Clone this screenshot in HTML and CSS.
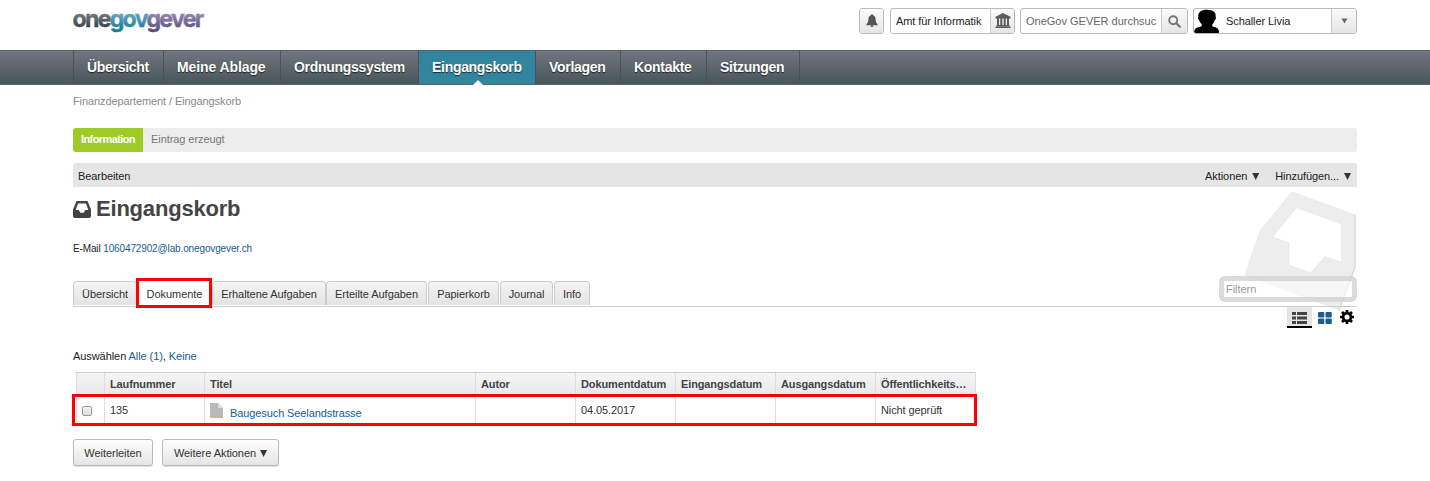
FILE: index.html
```html
<!DOCTYPE html>
<html lang="de">
<head>
<meta charset="utf-8">
<title>Eingangskorb</title>
<link rel="stylesheet" href="styles.css">
</head>
<body>
<header class="header wrap">
  <svg class="logo" width="136" height="38" viewBox="-2 -6 136 38" role="img" aria-label="onegovgever">
    <defs>
      <linearGradient id="g1" gradientUnits="userSpaceOnUse" x1="0" y1="5" x2="0" y2="20"><stop offset="0" stop-color="#777b80"/><stop offset="1" stop-color="#33434a"/></linearGradient>
      <linearGradient id="g2" gradientUnits="userSpaceOnUse" x1="0" y1="5" x2="0" y2="23"><stop offset="0" stop-color="#68a6c4"/><stop offset="1" stop-color="#19788f"/></linearGradient>
      <linearGradient id="g3" gradientUnits="userSpaceOnUse" x1="0" y1="5" x2="0" y2="23"><stop offset="0" stop-color="#948ab4"/><stop offset="1" stop-color="#574a79"/></linearGradient>
    </defs>
    <text x="-.5" y="19.300" textLength="130" lengthAdjust="spacingAndGlyphs"><tspan fill="url(#g1)" stroke="url(#g1)">one</tspan><tspan fill="url(#g2)" stroke="url(#g2)">gov</tspan><tspan fill="url(#g3)" stroke="url(#g3)">gever</tspan></text>
  </svg>
  <div class="tools">
    <div class="box bell"><span class="btn"><svg width="14" height="14" viewBox="0 0 14 14"><path d="M7 .3c.7 0 1 .4 1 1 1.900.5 2.500 2 2.600 3.900.1 2.400.6 3.400 2 5.200v.8H1.400v-.8c1.400-1.800 1.900-2.800 2-5.200.1-1.900.7-3.400 2.600-3.900 0-.6.3-1 1-1zM5.600 11.400h2.800c0 1-.6 1.500-1.400 1.500s-1.400-.5-1.400-1.500z" fill="#555"/></svg></span></div>
    <div class="box unit"><span class="grow">Amt für Informatik</span><span class="btn"><svg width="16" height="16" viewBox="0 0 16 16"><path d="M8 0l7.500 3.700V5.500H.5V3.700zM2 5.500h2v6.500H2zM5.300 5.500h2v6.500h-2zM8.700 5.500h2v6.500h-2zM12 5.500h2v6.500h-2zM1.500 12h13v1.200h-13zM.5 13.600h15V15H.5z" fill="#5c5c5c"/></svg></span></div>
    <div class="box search"><span class="grow">OneGov GEVER durchsuc</span><span class="btn"><svg width="13" height="13" viewBox="0 0 13 13"><circle cx="5.200" cy="5.200" r="4" fill="none" stroke="#777" stroke-width="1.900"/><path d="M8.300 8.300l3.500 3.500" stroke="#777" stroke-width="2.200" stroke-linecap="round"/></svg></span></div>
    <div class="box user"><svg class="avatar" width="25" height="24" viewBox="0 0 25 24"><path d="M0 24c0-3 1-4.500 3.500-5.500L7 17.500c1-.3 1-1.500.5-2.500-1.500-1.300-2-2.500-2.300-4C3.500 9.500 3.800 8.500 4.300 8 3.600 3.300 6.800.7 13 .7c6.600 0 9.300 3 8.700 7.300.5 1 .2 2.400-.9 3-.3 1.700-1 3-2.300 4-.5 1-.3 2 .3 2.500l3.200 1c2.200.7 3 2.500 3 5.500z" fill="#000"/></svg><span class="grow">Schaller Livia</span><span class="btn"><svg width="7" height="6" viewBox="0 0 7 6"><path d="M.5.5h6l-3 5z" fill="#666"/></svg></span></div>
  </div>
</header>
<nav class="nav"><div class="wrap navrow">
  <a class="n1">Übersicht</a><a class="n2">Meine Ablage</a><a class="n3">Ordnungssystem</a><a class="n4 active">Eingangskorb</a><a class="n5">Vorlagen</a><a class="n6">Kontakte</a><a class="n7">Sitzungen</a>
</div></nav>
<main class="wrap main">
  <div class="crumbs">Finanzdepartement / Eingangskorb</div>
  <div class="message"><strong>Information</strong><span>Eintrag erzeugt</span></div>
  <div class="actions"><span>Bearbeiten</span><span class="right">Aktionen <i class="tri"></i></span><span class="add">Hinzufügen... <i class="tri"></i></span></div>
  <svg class="mark" width="114" height="122" viewBox="0 0 114 122"><path fill-rule="evenodd" d="M50 0L113 23V75L97 118L3 83L18 39ZM54.500 15.500L30.500 45L47 51V73L68.500 81L83 64.500L99.500 70.500V32Z" fill="#ededed" stroke="#e2e2e2" stroke-width=".6"/><path d="M113 23v52L97 118" fill="none" stroke="#d9d9d9" stroke-width="1.300"/></svg>
  <h1><svg width="18" height="17" viewBox="0 0 18 17"><path fill-rule="evenodd" d="M3.500 0h11L18 8.500V15q0 2-2 2H2q-2 0-2-2V8.500zM5 2.500L2.700 9h3.100l1.500 2.700h3.400L12.200 9h3.100L13 2.500z" fill="#444"/></svg><span>Eingangskorb</span></h1>
  <div class="mail">E-Mail <a>1060472902@lab.onegovgever.ch</a></div>
  <div class="tabs">
    <a class="t1">Übersicht</a><a class="t2 current">Dokumente</a><a class="t3">Erhaltene Aufgaben</a><a class="t4">Erteilte Aufgaben</a><a class="t5">Papierkorb</a><a class="t6">Journal</a><a class="t7">Info</a>
    <div class="filter">Filtern</div>
  </div>
  <div class="views">
    <span class="view list"><svg width="15" height="12" viewBox="0 0 15 12"><path d="M0 0h4v3H0zM5 0h10v3H5zM0 4.500h4v3H0zM5 4.500h10v3H5zM0 9h4v3H0zM5 9h10v3H5z" fill="#444"/></svg></span>
    <svg class="tiles" width="14" height="12" viewBox="0 0 14 12"><g fill="#205c90"><rect width="6.300" height="5.400" rx="1"/><rect x="7.500" width="6.300" height="5.400" rx="1"/><rect y="6.500" width="6.300" height="5.400" rx="1"/><rect x="7.500" y="6.500" width="6.300" height="5.400" rx="1"/></g></svg>
    <svg class="gear" width="14" height="14" viewBox="0 0 14 14"><circle cx="7" cy="7" r="3.900" fill="none" stroke="#000" stroke-width="2.700"/><path d="M7 0v2.500M7 11.500V14M0 7h2.500M11.500 7H14M2 2l1.800 1.800M10.200 10.200L12 12M12 2l-1.800 1.800M3.800 10.200L2 12" stroke="#000" stroke-width="2.700"/></svg>
  </div>
  <div class="select">Auswählen <a>Alle (1)</a>, <a>Keine</a></div>
  <div class="listing">
    <div class="row head"><span></span><span>Laufnummer</span><span>Titel</span><span>Autor</span><span>Dokumentdatum</span><span>Eingangsdatum</span><span>Ausgangsdatum</span><span>Öffentlichkeits…</span></div>
    <div class="row data"><span><i class="check"></i></span><span>135</span><span class="title"><svg width="13" height="15" viewBox="0 0 13 15"><path d="M0 0h8l5 5v10H0z" fill="#b9b9b9"/><path d="M8 0v5h5z" fill="#dedede"/></svg><a>Baugesuch Seelandstrasse</a></span><span></span><span>04.05.2017</span><span></span><span></span><span>Nicht geprüft</span></div>
  </div>
  <div class="buttons"><span class="button b1">Weiterleiten</span><span class="button b2">Weitere Aktionen <i class="tri"></i></span></div>
</main>
</body>
</html>
```
FILE: styles.css
```css
* { box-sizing: border-box; }
body { margin: 0; background: #fff; color: #333; font: 11px/14px "Liberation Sans", Arial, sans-serif; height: 481px; overflow: hidden; }
a { color: #205c90; }
.wrap { width: 1284px; margin-left: 73px; position: relative; }
.header { height: 50px; display: flex; justify-content: space-between; padding-top: 8px; }
.logo { margin: -6px 0 0 -2px; overflow: visible; }
.logo text { font: 700 24px Inter, sans-serif; letter-spacing: -1.8px; stroke-width: .4px; }
.tools { display: flex; }
.box { height: 26px; display: flex; border: 1px solid #bbb; border-radius: 3px; line-height: 24px; overflow: hidden; color: #222; }
.grow { flex: 1; padding-left: 5px; white-space: nowrap; letter-spacing: -.08px; }
.btn { width: 25px; display: flex; align-items: center; justify-content: center; border-left: 1px solid #ccc; background: linear-gradient(#fafafa, #e5e5e5); }
.bell { width: 25px; margin-right: 6px; }
.bell .btn { border: 0; width: 23px; }
.unit { width: 125px; margin-right: 5px; }
.unit .btn { width: 24px; }
.search { width: 168px; margin-right: 5px; }
.search .grow { color: #666; letter-spacing: 0; }
.search .btn { width: 26px; }
.user { width: 164px; }
.user .grow { padding-left: 7px; }
.nav { height: 35px; background: linear-gradient(#70767d, #49555a); border-top: 1px solid #56616a; border-bottom: 1px solid #59656a; }
.navrow { display: flex; }
.navrow a { height: 33px; line-height: 33px; padding-left: 13px; border-left: 1px solid #495157; color: #fff; font-size: 14px; font-weight: bold; letter-spacing: -.3px; text-shadow: 0 1px 1px #222; position: relative; white-space: nowrap; }
.navrow .n2 { letter-spacing: -.1px; }
.navrow .active { background: #31859f; }
.active::after { content: ""; position: absolute; left: 54px; bottom: -1px; border: 5px solid transparent; border-top: 0; border-bottom-color: #fff; }
.n1 { width: 90px; } .n2 { width: 117px; } .n3 { width: 138px; } .n4 { width: 117px; } .n5 { width: 85px; } .n6 { width: 86px; }
.navrow .n7 { width: 94px; border-right: 1px solid #495157; }
.crumbs { height: 43px; padding-top: 9px; color: #888; letter-spacing: -.1px; }
.message { height: 24px; line-height: 23px; background: #ededed; border-radius: 3px; display: flex; color: #777; overflow: hidden; letter-spacing: -.07px; }
.message strong { width: 70px; background: #9fcb26; color: #fff; text-align: center; letter-spacing: -.6px; }
.message span { padding-left: 8px; }
.actions { margin-top: 11px; height: 24px; line-height: 26px; background: #e5e5e5; border-radius: 3px 3px 0 0; padding: 0 6px 0 5px; display: flex; color: #222; letter-spacing: -.08px; }
.right { margin-left: auto; margin-right: 16px; }
.tri { display: inline-block; width: 7px; height: 7px; background: #333; clip-path: polygon(0 0, 100% 0, 50% 100%); margin-left: 1px; }
.actions .tri { margin-left: 2px; }
.mark { position: absolute; right: 1px; top: 107px; }
h1 { margin: 0; height: 44px; display: flex; align-items: center; gap: 5px; font-size: 22px; line-height: 44px; color: #444; letter-spacing: -.2px; }
.mail { height: 50px; padding-top: 11px; font-size: 10px; color: #222; letter-spacing: -.13px; }
.tabs { height: 26px; display: flex; border-bottom: 1px solid #ccc; position: relative; letter-spacing: -.05px; }
.tabs a { height: 24px; line-height: 25px; margin-right: 1px; text-align: center; color: #333; border: 1px solid #ccc; border-bottom: 0; border-radius: 4px 4px 0 0; background: linear-gradient(#f4f4f4, #e3e3e3); white-space: nowrap; }
.tabs .current { height: 30px; margin: -3px 0 0 -2px; padding-left: 1px; line-height: 26px; border: 3px solid #f00; border-radius: 0; background: #fff; z-index: 1; }
.t1 { width: 64px; } .t2 { width: 76px; } .tabs .t3 { width: 114px; margin-right: 0; } .t4 { width: 101px; } .t5 { width: 71px; } .t6 { width: 53px; } .t7 { width: 36px; }
.filter { position: absolute; right: 0; top: -5px; width: 138px; height: 26px; border: 5px solid rgba(210,210,210,.8); border-radius: 6px; background: rgba(255,255,255,.5); background-clip: padding-box; color: #999; line-height: 16px; padding-left: 2px; }
.views { height: 42px; display: flex; justify-content: flex-end; position: relative; }
.list { width: 25px; height: 21px; background: #e5e5e5; border-bottom: 2px solid #000; display: flex; justify-content: center; padding-top: 5px; }
.tiles { margin: 5px 8px 0 6px; }
.gear { margin: 3px 3px 0 0; }
.select { height: 23px; color: #222; letter-spacing: -.07px; }
.listing { width: 905px; height: 54px; margin-left: -1px; }
.row { display: grid; grid-template-columns: 28px 100px 271px 100px 100px 100px 100px 100px; margin-left: 4px; width: 900px; }
.row > span { border-left: 1px solid #ddd; padding-left: 5px; overflow: hidden; white-space: nowrap; }
.head { height: 22px; border-top: 1px solid #ccc; background: linear-gradient(#f5f5f5, #e9e9e9); border-right: 1px solid #ddd; font-weight: bold; line-height: 22px; color: #444; letter-spacing: -.12px; }
.data { width: 905px; height: 32px; margin-left: 0; padding-left: 1px; border: 3px solid #f00; line-height: 26px; color: #333; background: #fff; letter-spacing: -.1px; }
.title { display: flex; }
.title svg { margin: 6px 7px 0 0; }
.title a { line-height: 32px; }
.check { display: block; width: 10px; height: 10px; margin-top: 9px; border: 1px solid #999; border-radius: 2px; background: linear-gradient(#f5f5f5, #ddd); }
.buttons { display: flex; gap: 9px; padding-top: 13px; }
.button { height: 27px; line-height: 27px; text-align: center; border: 1px solid #bbb; border-radius: 3px; background: linear-gradient(#fefefe, #e5e5e5); box-shadow: 0 1px 1px #ddd; letter-spacing: -.05px; }
.b1 { width: 80px; } .b2 { width: 117px; }
```
